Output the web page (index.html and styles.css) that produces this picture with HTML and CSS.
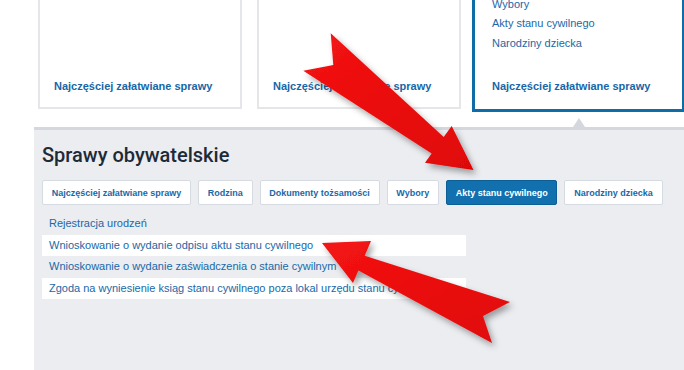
FILE: index.html
```html
<!DOCTYPE html>
<html lang="pl">
<head>
<meta charset="utf-8">
<title>Sprawy obywatelskie</title>
<link rel="stylesheet" href="styles.css">
</head>
<body>
<div class="page">
  <div class="cards">
    <div class="card">
      <a class="card-title" href="#">Najczęściej załatwiane sprawy</a>
    </div>
    <div class="card">
      <a class="card-title" href="#">Najczęściej załatwiane sprawy</a>
    </div>
    <div class="card card-active">
      <ul class="card-links">
        <li><a href="#">Wybory</a></li>
        <li><a href="#">Akty stanu cywilnego</a></li>
        <li><a href="#">Narodziny dziecka</a></li>
      </ul>
      <a class="card-title" href="#">Najczęściej załatwiane sprawy</a>
    </div>
  </div>

  <section class="panel">
    <span class="pointer"></span>
    <h2 class="panel-title">Sprawy obywatelskie</h2>
    <div class="tabs">
      <a class="tab" href="#">Najczęściej załatwiane sprawy</a>
      <a class="tab" href="#">Rodzina</a>
      <a class="tab" href="#">Dokumenty tożsamości</a>
      <a class="tab" href="#">Wybory</a>
      <a class="tab tab-active" href="#">Akty stanu cywilnego</a>
      <a class="tab" href="#">Narodziny dziecka</a>
    </div>
    <ul class="list">
      <li><a href="#">Rejestracja urodzeń</a></li>
      <li><a href="#">Wnioskowanie o wydanie odpisu aktu stanu cywilnego</a></li>
      <li><a href="#">Wnioskowanie o wydanie zaświadczenia o stanie cywilnym</a></li>
      <li><a href="#">Zgoda na wyniesienie ksiąg stanu cywilnego poza lokal urzędu stanu cywilnego</a></li>
    </ul>
  </section>

  <svg class="arrows" width="684" height="370" viewBox="0 0 684 370" aria-hidden="true">
    <defs>
      <linearGradient id="red" x1="0" y1="0" x2="1" y2="1">
        <stop offset="0" stop-color="#f41414"/>
        <stop offset="1" stop-color="#e00606"/>
      </linearGradient>
      <filter id="shadow" x="-20%" y="-20%" width="140%" height="140%">
        <feDropShadow dx="3" dy="4" stdDeviation="3" flood-color="#000" flood-opacity="0.35"/>
      </filter>
    </defs>
    <polygon fill="url(#red)" filter="url(#shadow)"
      points="330.7,33.3 443.7,137 451.7,126 473.5,170 425,162.7 431.7,153.5 303.3,70.7 333.3,65"/>
    <polygon fill="url(#red)" filter="url(#shadow)"
      points="322,243 371,241 364.7,255.7 510,302 483,316 492,343 358.4,270.4 353,283"/>
  </svg>
</div>
</body>
</html>
```

FILE: styles.css
```css
html, body {
  margin: 0;
  padding: 0;
  overflow: hidden;
  background: #ffffff;
}

.page {
  position: relative;
  width: 684px;
  height: 370px;
  overflow: hidden;
  font-family: "Liberation Sans", Arial, sans-serif;
}

a {
  text-decoration: none;
  color: #1a68a7;
}

ul {
  list-style: none;
  margin: 0;
  padding: 0;
}

/* Cards row */
.cards {
  display: flex;
  align-items: flex-start;
  gap: 15px;
  margin: -40px 0 0 38px;
}

.card {
  box-sizing: border-box;
  width: 204px;
  height: 149px;
  background: #ffffff;
  border: 2px solid #e4e6ea;
  display: flex;
  flex-direction: column;
  justify-content: flex-end;
  padding: 0 0 14px 14px;
}

.card-title {
  font-size: 11px;
  font-weight: bold;
  line-height: 14px;
  color: #1766a6;
}

.card-active {
  flex: 1;
  height: 152px;
  margin-left: -4px;
  border: 3px solid #0f6ca6;
  border-right-width: 2px;
  padding: 0 0 16px 17px;
}

.card-links {
  margin-bottom: 26px;
}

.card-links li {
  font-size: 11px;
  line-height: 19.5px;
}

/* Panel */
.panel {
  position: relative;
  margin: 15px 0 0 34px;
  height: 260px;
  background: #ebedf1;
  border-top: 3px solid #d5d7df;
  padding: 13px 0 0 8px;
}

.pointer {
  position: absolute;
  left: 539px;
  top: -12px;
  width: 0;
  height: 0;
  border-left: 6px solid transparent;
  border-right: 6px solid transparent;
  border-bottom: 9px solid #d5d7df;
}

.panel-title {
  margin: 0;
  font-family: Roboto, "Liberation Sans", sans-serif;
  font-size: 20px;
  font-weight: 500;
  line-height: 24px;
  color: #1f2a37;
}

.tabs {
  display: flex;
  gap: 7px;
  margin-top: 13px;
}

.tab {
  box-sizing: border-box;
  height: 25px;
  padding: 0 8.75px;
  display: flex;
  align-items: center;
  background: #ffffff;
  border: 1px solid #d6dae1;
  border-radius: 2px;
  font-size: 9px;
  font-weight: bold;
  color: #1a68a7;
  white-space: nowrap;
}

.tab-active {
  background: #1170ad;
  border-color: #0c5f95;
  color: #ffffff;
}

.list {
  margin-top: 8px;
  width: 424px;
}

.list li {
  height: 21.5px;
  line-height: 21.5px;
  padding-left: 7px;
  font-size: 11px;
  white-space: nowrap;
}

.list li:nth-child(even) {
  background: #ffffff;
}

.list a {
  color: #1a68a7;
}

/* Annotation arrows overlay */
.arrows {
  position: absolute;
  left: 0;
  top: 0;
  pointer-events: none;
}
```
